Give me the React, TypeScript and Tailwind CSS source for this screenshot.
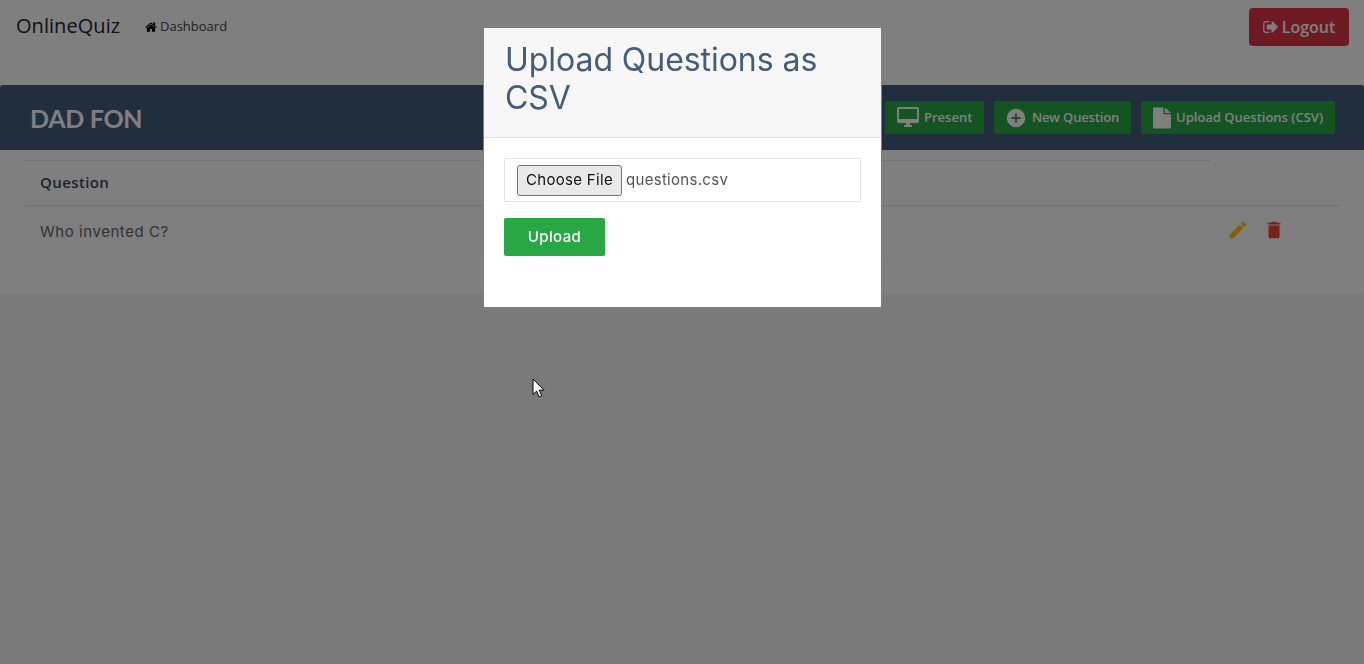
import React from 'react';

const GREEN_BUTTON =
  'flex h-[33px] items-center whitespace-nowrap rounded-[2px] bg-[#28a745] text-[13px] font-semibold text-white';

function HomeIcon() {
  return (
    <svg viewBox="0 0 1664 1312" className="h-[10px] w-[12px]" fill="currentColor">
      <path d="M1408 768v480q0 26-19 45t-45 19H960V928H704v384H320q-26 0-45-19t-19-45V768L832 293l576 475zm223-69-62 74q-8 9-21 11h-3q-13 0-21-7L832 200 140 777q-12 8-24 7-13-2-21-11l-62-74q-8-10-7-23.500T37 654l719-599q32-26 76-26t76 26l244 204V64q0-14 9-23t23-9h192q14 0 23 9t9 23v408l219 182q10 8 11 21.500t-7 23.500z" />
    </svg>
  );
}

function SignOutIcon() {
  return (
    <svg viewBox="0 0 1568 1280" className="h-[12px] w-[15px]" fill="currentColor">
      <path d="M640 1184q0 4 1 20t.5 26.500-3 23.500-10 19.500-20.500 6.500H288q-119 0-203.500-84.500T0 992V288Q0 169 84.500 84.500T288 0h320q13 0 22.500 9.500T640 32q0 4 1 20t.5 26.500-3 23.500-10 19.500T608 128H288q-66 0-113 47t-47 113v704q0 66 47 113t113 47h312l11.500 1 11.500 3 8 5.500 7 9 2 13.500zm928-544q0 26-19 45l-544 544q-19 19-45 19t-45-19-19-45V896H448q-26 0-45-19t-19-45V448q0-26 19-45t45-19h448V96q0-26 19-45t45-19 45 19l544 544q19 19 19 45z" />
    </svg>
  );
}

function Navbar() {
  return (
    <nav className="flex h-[85px] items-start justify-between bg-white pl-4 pr-[15px] pt-2">
      <div className="flex items-center">
        <a className="w-[129px] pb-px text-[20px] leading-[36px] tracking-[0.05px] text-[#222]">OnlineQuiz</a>
        <a className="flex items-center gap-[3px] text-[13px] leading-[37px] text-[#444]">
          <span className="text-black"><HomeIcon /></span>
          Dashboard
        </a>
      </div>
      <button className="flex h-[38px] w-[100px] items-center justify-center gap-[4px] rounded-[4px] bg-[#dc3545] text-[16px] font-semibold text-white">
        <SignOutIcon />
        Logout
      </button>
    </nav>
  );
}

function TitleBar() {
  return (
    <header className="flex h-[65px] items-center justify-between rounded-t-[3px] bg-[#435d7d] pl-[30px] pr-[29px]">
      <h2 className="pt-[1px] font-['Lato'] text-[25px] font-bold leading-none tracking-[-0.3px] text-white">DAD FON</h2>
      <div className="flex gap-[10px]">
        <button className={`${GREEN_BUTTON} w-[99px] gap-[4px] pl-[11px]`}>
          <svg viewBox="0 0 24 24" className="h-6 w-6 -translate-y-px" fill="currentColor">
            <path d="M21 2H3a2 2 0 0 0-2 2v12a2 2 0 0 0 2 2h7v2H8v2h8v-2h-2v-2h7a2 2 0 0 0 2-2V4a2 2 0 0 0-2-2zm0 12H3V4h18z" />
          </svg>
          Present
        </button>
        <button className={`${GREEN_BUTTON} w-[137px] gap-[5px] pl-[11px] tracking-[-0.15px]`}>
          <svg viewBox="0 0 24 24" className="h-[22px] w-[22px]" fill="currentColor">
            <path d="M12 2a10 10 0 1 0 0 20 10 10 0 0 0 0-20zm5 11h-4v4h-2v-4H7v-2h4V7h2v4h4z" />
          </svg>
          New Question
        </button>
        <button className={`${GREEN_BUTTON} w-[194px] gap-[5px] pl-[12px]`}>
          <svg viewBox="0 0 19 22" className="h-[22px] w-[18px]" fill="currentColor">
            <path d="M1 0h10v7h8v14a1 1 0 0 1-1 1H1a1 1 0 0 1-1-1V1a1 1 0 0 1 1-1zm11.500 0L19 5.800h-6.500z" />
          </svg>
          Upload Questions (CSV)
        </button>
      </div>
    </header>
  );
}

function QuestionTable() {
  return (
    <section className="h-[144px] rounded-b-[3px] bg-white pl-[25px] pr-[25px] pt-[10px] text-[15px] text-[#566787]">
      <div className="mr-[128px] h-[45px] border-t border-[#e9e9e9] pl-[15px] text-[15px] font-semibold leading-[42px] tracking-[0.4px] text-[#3d4761]">
        Question
      </div>
      <div className="flex h-[53px] items-center justify-between border-t border-[#e0e0e0] bg-[#fcfcfc] pl-[15px] pr-[54px] text-[#666]">
        <span className="font-['Inter'] text-[15px] tracking-[0.55px]">Who invented C?</span>
        <span className="flex gap-[14px] pb-[5px]">
          <svg viewBox="0 0 24 24" className="h-[22px] w-[22px] text-[#ffc107]" fill="currentColor">
            <path d="M3 17.250V21h3.750L17.810 9.940l-3.750-3.750L3 17.250zM20.710 7.040a1 1 0 0 0 0-1.410l-2.340-2.340a1 1 0 0 0-1.410 0l-1.830 1.830 3.750 3.750 1.830-1.830z" />
          </svg>
          <svg viewBox="0 0 24 24" className="h-[22px] w-[22px] text-[#f44336]" fill="currentColor">
            <path d="M6 19c0 1.100.9 2 2 2h8c1.100 0 2-.9 2-2V7H6v12zM19 4h-3.500l-1-1h-5l-1 1H5v2h14V4z" />
          </svg>
        </span>
      </div>
    </section>
  );
}

function UploadDialog() {
  return (
    <div className="fixed inset-0 flex items-start bg-black/50 pl-[483px] pt-[27px]">
      <div className="h-[281px] w-[399px] rounded-[2px] border border-black/50 bg-white">
        <div className="h-[110px] border-b border-[#dee2e6] bg-[#f7f7f7] pl-[21px] pt-[13px]">
          <h4 className="w-[340px] font-['Inter'] text-[32px] leading-[38px] tracking-[-0.05px] text-[#435d7d]">
            Upload Questions as CSV
          </h4>
        </div>
        <div className="flex flex-col items-start gap-4 pl-[20px] pt-5">
          <div className="flex h-[44px] w-[357px] items-center gap-[4px] rounded-[2px] border border-[#e3e3e3] pl-3 font-['Inter'] text-[#555]">
            <button className="flex h-[31px] w-[105px] items-center justify-center rounded-[3px] border border-[#767676] bg-[#e9e9e9] text-[15px] tracking-[0.3px] text-[#111]">
              Choose File
            </button>
            <span className="text-[15px] tracking-[0.3px]">questions.csv</span>
          </div>
          <button className="h-[38px] w-[101px] rounded-[2px] bg-[#28a745] pt-[1px] font-['Inter'] text-[15px] font-medium tracking-[0.4px] text-white">
            Upload
          </button>
        </div>
      </div>
    </div>
  );
}

function Pointer() {
  return (
    <svg viewBox="0 0 13 20" className="pointer-events-none fixed left-[532px] top-[378px] h-[20px] w-[13px]">
      <path d="M1 1v15.500l3.600-3.400 2.500 5.700 2.600-1.100-2.500-5.600h4.700z" fill="white" stroke="black" strokeWidth="1" />
    </svg>
  );
}

export default function App() {
  return (
    <div className="min-h-screen bg-[#f5f5f5] font-['Open_Sans','Noto_Sans',sans-serif]">
      <Navbar />
      <TitleBar />
      <QuestionTable />
      <UploadDialog />
      <Pointer />
    </div>
  );
}
